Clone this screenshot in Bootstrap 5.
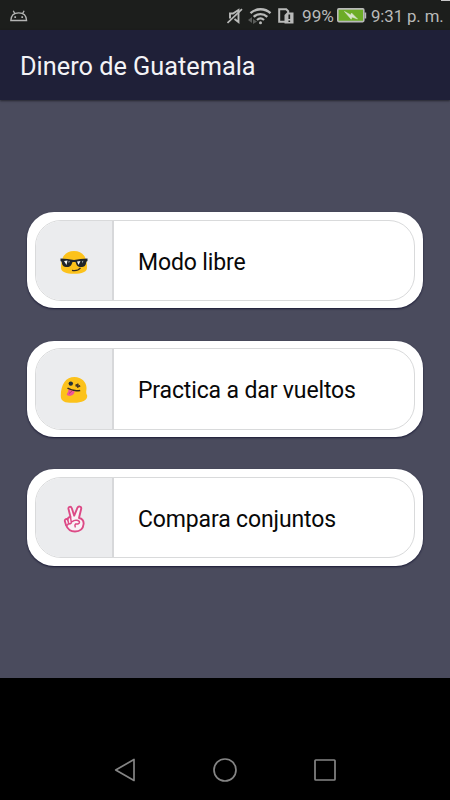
<!DOCTYPE html>
<html lang="es">
<head>
<meta charset="utf-8">
<meta name="viewport" content="width=device-width, initial-scale=1">
<title>Dinero de Guatemala</title>
<link href="https://cdn.jsdelivr.net/npm/bootstrap@5.3.0/dist/css/bootstrap.min.css" rel="stylesheet">
<style>
body{font-family:Roboto,"Liberation Sans",sans-serif;background:#4a4b5d;height:800px;overflow:hidden}
svg{display:block;flex:none}
.status-strip{height:30px;background:#1c1e1c;color:#b9bab9;padding:1px 7px 0 10px;font-size:17.2px;line-height:28px;border-image:linear-gradient(90deg,transparent 97.8%,#c8c8c8 97.8%) 1;border-top:1px solid;white-space:nowrap}
.status-strip span{display:block}
.charge{width:35px;padding-left:8px}
.clock{width:76px;padding-left:4px;font-size:16.8px;letter-spacing:-.1px}
.title-bar{height:70px;background:#1f2038;box-shadow:0 1px 2px rgba(0,0,0,.5);padding:4px 20px 0;z-index:1}
.title-bar h1{font-size:25.3px;font-weight:400;color:#f3f3f6;line-height:1;white-space:nowrap}
.choices{padding:112px 27px 0 27px;gap:32.300px}
.choice{height:96.4px;border-radius:27px;padding:7.5px 8px 7.5px 7.5px;background:#fff;box-shadow:0 1px 2px rgba(10,10,40,.75);border:0}
.choice-inner{border:1px solid #d9dadb;border-radius:26px;overflow:hidden;background:#fff}
.choice-icon{width:78.5px;background:#ebecee;border-right:2px solid #d7d8da;padding-top:3px}
.choice-label{font-size:23px;letter-spacing:-.14px;color:#080808;padding-left:24px;padding-top:4px;line-height:1;white-space:nowrap}
.nav-keys{height:122.5px;background:#000;padding:0 114px 18px}
</style>
<script src="https://cdn.jsdelivr.net/npm/bootstrap@5.3.0/dist/js/bootstrap.bundle.min.js"></script>
</head>
<body class="d-flex flex-column m-0">
<div class="status-strip d-flex align-items-center flex-shrink-0">
  <svg width="18" height="12" viewBox="0 0 18 12" fill="none" stroke="#b4b5b4" stroke-width="1.3"><path d="M.8 10.5C1 5.500 4.200 2.800 8.700 2.800s7.700 2.700 7.900 7.700zM4.700 3.500 3.300.8M12.700 3.500l1.400-2.700"/><path d="M5.200 6.300v1.700M12.200 6.300v1.700" stroke-width="1.700"/></svg>
  <div class="d-flex align-items-center ms-auto">
    <svg width="16" height="16" viewBox="0 0 16 16" fill="none" stroke="#b9bab9" stroke-width="1.900"><path d="M3 10.500V5.500H6l5.500-3.500v12L7.500 11"/><path d="M.5 15 15 1.200" stroke-width="1.700"/></svg>
    <svg style="margin-left:5px" width="24" height="18" viewBox="0 0 24 18" fill="none" stroke="#b9bab9" stroke-width="2.300"><path d="M2.500 6.200c5.500-5.300 14.500-5.300 20 0M5.700 9.800c4-3.700 9.600-3.700 13.600 0M9 13c2.200-2 4.800-2 7 0"/><circle cx="12.500" cy="15.800" r="1.500" fill="#b9bab9" stroke="none"/><path d="M4 10v6L0 13z" fill="#5b5d5b" stroke="none"/><path d="M5 12v5l4-2.500z" fill="#5b5d5b" stroke="none"/></svg>
    <svg style="margin-left:6px" width="16" height="16" viewBox="0 0 16 16"><path d="M1.200 1.200h7l2 2v10.500h-9z" fill="none" stroke="#b9bab9" stroke-width="2"/><path d="M6.500 7 9 4.500h6.500V15.500h-9z" fill="#b9bab9"/><path d="M11.300 6.500v4.500M11.300 12.500v1.500" stroke="#1c1e1c" stroke-width="1.700"/></svg>
    <span class="charge">99%</span>
    <svg style="margin-left:8px" width="30" height="16" viewBox="0 0 30 16"><rect x=".8" y=".900" width="26" height="12.700" rx="1" fill="#6dac27" stroke="#b9bab9" stroke-width="1.600"/><path d="M27.500 4.500h1.700v6h-1.700z" fill="#b9bab9"/><path d="m7.500 3.500 6.300 3.500.7-2L20.500 11l-5.500-2-.8 2.200z" fill="#d9e4cc" stroke="#d9e4cc" stroke-width=".6"/></svg>
    <span class="clock">9:31 p. m.</span>
  </div>
</div>
<header class="title-bar d-flex align-items-center position-relative flex-shrink-0"><h1 class="m-0">Dinero de Guatemala</h1></header>
<main class="choices d-flex flex-column flex-grow-1">
  <button class="choice d-flex w-100 text-start"><span class="choice-inner d-flex w-100 h-100">
    <span class="choice-icon d-flex align-items-center justify-content-center flex-shrink-0">
      <svg width="28" height="28" viewBox="0 0 28 28"><path d="M1 20C1 8 6 3 14 3s13 5 13 17c0 3.800-5 5.800-13 5.800S1 23.800 1 20z" fill="#fcc21b"/><path d="M.5 10.500c5 .2 9 .7 13.500 1.500 4.500-.8 8.500-1.300 13.500-1.500V13l-1.200.8c-.5 4.500-2 5.200-5.300 5.200-3.500 0-4.500-2-5.500-5h-3c-1 3-2 5-5.500 5-3.300 0-4.800-.7-5.300-5.200L.5 13z" fill="#20252a"/><path d="m4 13 3.500-.5-1 4.500zM17 13.500l3.500-.5-2 4z" fill="#f5f7f7"/><path d="m8.500 13 1.500.3-1.300 2zM22 13l1.500-.2-1.300 2.700z" fill="#9ea4a5"/><path d="M12 22.300c3.500.7 6.500 0 8.500-2.500" fill="none" stroke="#342b20" stroke-width="1.300"/></svg>
    </span><span class="choice-label align-self-center">Modo libre</span></span></button>
  <button class="choice d-flex w-100 text-start"><span class="choice-inner d-flex w-100 h-100">
    <span class="choice-icon d-flex align-items-center justify-content-center flex-shrink-0">
      <svg width="28" height="28" viewBox="0 0 28 28"><path d="M.8 20C.8 8 6 1 14.500 1 21.500 1 26.500 6 26.500 12c0 2.500-1 5 .7 7.500.5 5-5.500 7.300-13 7.300C6 27 .8 26 .8 20z" fill="#fcc21b"/><circle cx="10.800" cy="7.600" r="2.200" fill="#202f3b"/><path d="M15.500 9.500c2 .8 3.500.8 4.700.3L17 11.300M15.500 9.500l3-1.500" fill="none" stroke="#493822" stroke-width="1.600"/><path d="M7.500 12.200c3.500 2.200 8 3 12.700 2.200" fill="none" stroke="#352a20" stroke-width="1.500"/><path d="m8.500 13.500 6.300 2c-.5 3-3.300 4.800-6 4.300-2.500-.3-2.500-2-.8-3.500z" fill="#ef5598"/><path d="m12 15-3 2.500" stroke="#b64567"/></svg>
    </span><span class="choice-label align-self-center">Practica a dar vueltos</span></span></button>
  <button class="choice d-flex w-100 text-start"><span class="choice-inner d-flex w-100 h-100">
    <span class="choice-icon d-flex align-items-center justify-content-center flex-shrink-0">
      <svg width="28" height="28" viewBox="0 0 28 28" fill="#f9f3f6" stroke="#dc4a86" stroke-width="1.900" stroke-linejoin="round" stroke-linecap="round"><path d="M10.500 12 8.500 4C8 1.500 11 1 11.800 3.200l2.400 7.500 3.300-8c.9-2 4.200-1.200 3.700 1L19 13c3.800.8 4.800 3 4.600 6-.5 5-4 7.500-8.600 7.500-4.500 0-7.500-2.500-9-6.500l-1.200-4c-.2-2 2-2.700 2.900-1.200-.3-1.800 1.300-2.600 2.800-2.800z"/><path d="m7.700 14.800.9 3.200c.6 1.500 2.800.9 2.700-.7L10.500 12M6 20c1.300.5 2.300-.3 2.600-2M12.500 16.500c2-2.200 7-1.500 7 .8 0 1.400-1.800 2-3.800 1.600-1 1-1 2-.5 3" fill="none" stroke-width="1.500"/></svg>
    </span><span class="choice-label align-self-center">Compara conjuntos</span></span></button>
</main>
<footer class="nav-keys d-flex align-items-end justify-content-between flex-shrink-0">
  <svg width="22" height="24" viewBox="0 0 22 24" fill="none" stroke="#858585" stroke-width="1.700" stroke-linejoin="round"><path d="M1.700 12 20 1.500v21z"/></svg>
  <svg width="24" height="24" viewBox="0 0 24 24" fill="none" stroke="#858585" stroke-width="1.700"><circle cx="12" cy="12" r="11"/></svg>
  <svg width="22" height="24" viewBox="0 0 22 24" fill="none" stroke="#858585" stroke-width="1.700"><rect x="1" y="2" width="20" height="20" rx=".8"/></svg>
</footer>
</body>
</html>
